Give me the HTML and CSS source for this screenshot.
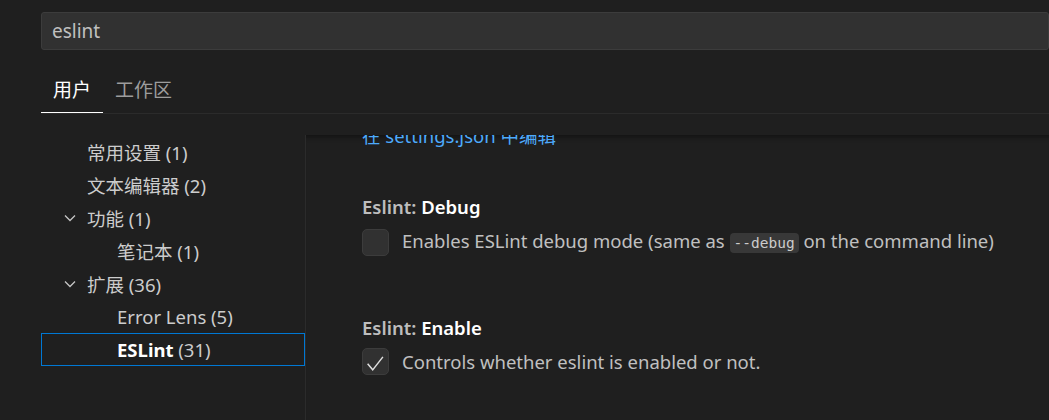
FILE: index.html
```html
<!DOCTYPE html>
<html lang="zh">
<head>
<meta charset="utf-8">
<title>Settings</title>
<link rel="stylesheet" href="styles.css">
</head>
<body>
<div class="editor">
  <header class="header">
    <div class="search">eslint</div>
    <nav class="tabs">
      <span class="tab active">用户</span>
      <span class="tab">工作区</span>
    </nav>
  </header>
  <div class="body">
    <aside class="toc">
      <div class="row l1"><span class="label">常用设置 (1)</span></div>
      <div class="row l1"><span class="label">文本编辑器 (2)</span></div>
      <div class="row group"><svg class="chev" viewBox="0 0 16 16"><path d="M3 5.5 L8 10.5 L13 5.5" fill="none" stroke="#c5c5c5" stroke-width="1.3"/></svg><span class="label">功能 (1)</span></div>
      <div class="row l2"><span class="label">笔记本 (1)</span></div>
      <div class="row group"><svg class="chev" viewBox="0 0 16 16"><path d="M3 5.5 L8 10.5 L13 5.5" fill="none" stroke="#c5c5c5" stroke-width="1.3"/></svg><span class="label">扩展 (36)</span></div>
      <div class="row l2"><span class="label">Error Lens (5)</span></div>
      <div class="row l2 selected"><span class="label"><b>ESLint</b> (31)</span></div>
    </aside>
    <main class="content">
      <a class="link">在 settings.json 中编辑</a>
      <div class="settings">
        <section class="setting">
          <div class="title"><span class="cat">Eslint: </span><span class="name">Debug</span></div>
          <div class="value">
            <span class="checkbox"></span>
            <span class="desc">Enables ESLint debug mode (same as <code>--debug</code> on the command line)</span>
          </div>
        </section>
        <section class="setting">
          <div class="title"><span class="cat">Eslint: </span><span class="name">Enable</span></div>
          <div class="value">
            <span class="checkbox checked"><svg viewBox="0 0 27 27"><path d="M5 16 L10.5 22.5 L21.5 8.5" fill="none" stroke="#e0e0e0" stroke-width="1.6"/></svg></span>
            <span class="desc">Controls whether eslint is enabled or not.</span>
          </div>
        </section>
      </div>
    </main>
  </div>
</div>
</body>
</html>
```

FILE: styles.css
```css
* { box-sizing: border-box; }
html, body {
  margin: 0;
  padding: 0;
  background: #1f1f1f;
  width: 1049px;
  height: 420px;
  overflow: hidden;
}
body {
  font-family: "Noto Sans", "Noto Sans CJK SC", sans-serif;
  font-size: 18.5px;
  color: #cccccc;
}
.editor {
  display: flex;
  flex-direction: column;
  height: 420px;
}
.header {
  padding: 12px 0 0 41px;
  height: 135px;
  flex: none;
}
.search {
  height: 38px;
  background: #313131;
  border: 1px solid #3c3c3c;
  border-radius: 3px;
  padding-left: 10px;
  line-height: 36px;
  color: #c0c0c0;
  font-size: 19px;
}
.tabs {
  margin-top: 15px;
  height: 49px;
  display: flex;
  border-bottom: 1px solid #2b2b2b;
}
.tab {
  font-family: "Noto Sans CJK SC", sans-serif;
  padding: 0 12px;
  line-height: 48px;
  height: 48px;
  color: #9d9d9d;
  font-size: 19px;
}
.tab.active {
  color: #ffffff;
  border-bottom: 1px solid #ffffff;
}
.body {
  flex: 1;
  display: flex;
  min-height: 0;
}
.toc {
  width: 306px;
  flex: none;
  padding-left: 41px;
  border-right: 1px solid #2b2b2b;
}
.row {
  height: 33px;
  display: flex;
  align-items: center;
  border: 1px solid transparent;
  font-size: 18.5px;
}
.label { white-space: pre; }
.row.l1 { padding-left: 45px; }
.row.l2 { padding-left: 75px; }
.row.group { padding-left: 19px; }
.chev {
  width: 16px;
  height: 16px;
  margin-left: 1px;
  margin-right: 9px;
  flex: none;
}
.row.selected {
  border-color: #0078d4;
}
.row.selected b {
  color: #ffffff;
  font-weight: 700;
}
.content {
  flex: 1;
  overflow: hidden;
  padding-left: 56px;
  box-shadow: inset 0 7px 5px -5px #121212;
}
.link {
  display: block;
  color: #4daafc;
  line-height: 27px;
  margin-top: -13px;
}
.settings {
  margin-top: 44px;
  display: flex;
  flex-direction: column;
  gap: 57px;
}
.setting {
  display: flex;
  flex-direction: column;
  gap: 7px;
}
.title {
  line-height: 27px;
  font-weight: 600;
}
.cat { color: #bdbdbd; }
.name { color: #ffffff; }
.value {
  display: flex;
  align-items: center;
  gap: 13px;
}
.checkbox {
  width: 27px;
  height: 27px;
  flex: none;
  background: #313131;
  border: 1px solid #3c3c3c;
  border-radius: 5px;
  display: flex;
}
.checkbox svg {
  width: 25px;
  height: 25px;
}
.desc {
  color: #c0c0c0;
  line-height: 27px;
}
code {
  font-family: "DejaVu Sans Mono", monospace;
  font-size: 14.5px;
  background: #383838;
  color: #cccccc;
  border-radius: 4px;
  padding: 2px 4px;
}
```
